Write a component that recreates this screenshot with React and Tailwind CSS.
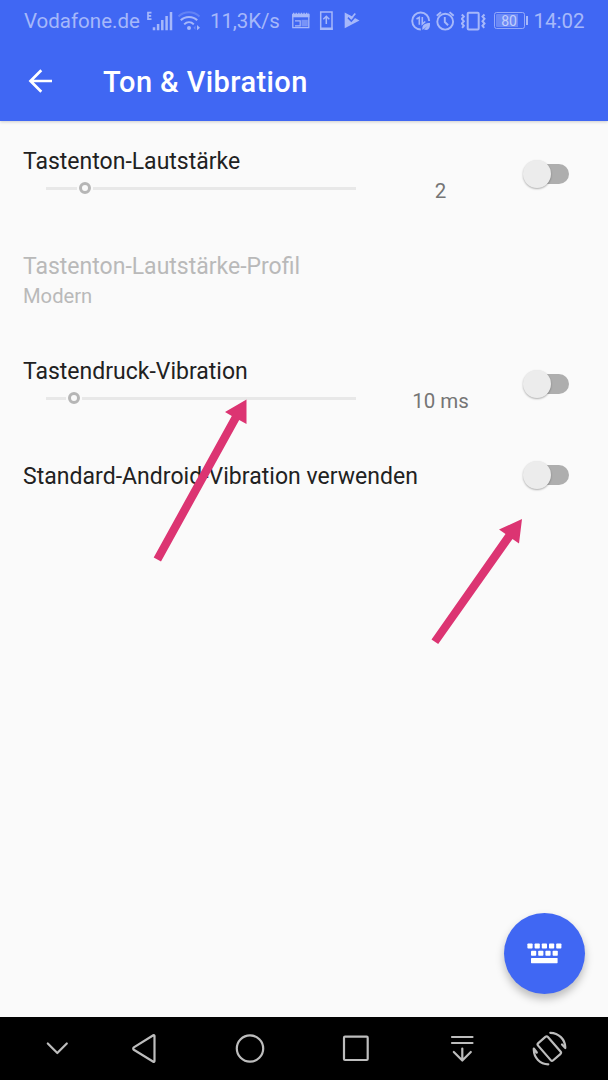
import React, { useState } from 'react';

// Icons of the status bar (left part)
const SignalIcon = () => (
  <svg className="ml-[7px] h-[22px] w-[28px] shrink-0" viewBox="146 9 28 22" fill="none" stroke="currentColor">
    <path d="M151.500 11.600h-3.500v6.600h3.500M148 14.900h3.200" strokeWidth="1.700" />
    <path d="M154 26.200v3M158.100 23v6.200M162.300 19v10.200M166.600 15v14.200M171 11v18.200" strokeWidth="2.500" />
  </svg>
);

const WifiIcon = () => (
  <svg className="ml-[4px] h-[22px] w-[23px] shrink-0" viewBox="178 9 23 22" fill="none" stroke="currentColor" strokeWidth="2">
    <path d="M178.500 15.400C184.500 10 193.500 10 199.500 15.400" opacity="0.350" />
    <path d="M180.800 19.300C185 15 193 15 197.200 19.300M184.200 23.400C187 20.600 191 20.600 193.800 23.400" />
    <circle cx="189" cy="27" r="2" fill="currentColor" stroke="none" />
    <path d="M195.500 24.500l-2 2.300 2 2.300z" fill="currentColor" stroke="none" opacity="0.400" />
    <path d="M197 24l3 2.700-3 2.600z" fill="currentColor" stroke="none" />
  </svg>
);

const NewsIcon = () => (
  <svg className="h-[18px] w-[18px] shrink-0" viewBox="292 12 18 18" fill="none" stroke="currentColor">
    <path d="M292.800 14.500h16v13.200h-16z" strokeWidth="1.300" />
    <path d="M292.200 15.800h17.200" strokeWidth="3" />
    <path d="M293 13.500h16" strokeWidth="1.500" strokeDasharray="1.300 1.300" />
    <path d="M295 20.800h5.200v5H295" strokeWidth="1.200" />
    <path d="M301.500 19.800h6.300v6.600h-6.300z" fill="currentColor" stroke="none" opacity="0.550" />
  </svg>
);

const UpdateIcon = () => (
  <svg className="ml-[9px] h-[20px] w-[14px] shrink-0" viewBox="319 11 14 20" fill="none" stroke="currentColor">
    <path d="M320.700 12h11.300v17.300h-11.300z" strokeWidth="1.500" />
    <path d="M320 28.700h12.700" strokeWidth="2.400" />
    <path d="M326.300 24v-7.500M323.300 19.300l3-3 3 3" strokeWidth="1.500" />
  </svg>
);

const PlayCheckIcon = () => (
  <svg className="-mt-[2px] ml-[11px] h-[17px] w-[16px] shrink-0" viewBox="344 12 16 17">
    <path d="M344.700 12.500L359.500 20.500 344.700 28.200z" fill="currentColor" />
    <path d="M348 17.600l3.300 3.400 6.500-7.300" fill="none" stroke="#4067f3" strokeWidth="1.600" />
    <path d="M349 15.700l2.300 2.500 4-4.700" fill="none" stroke="currentColor" strokeWidth="1.700" />
  </svg>
);

// Icons of the status bar (right part)
const DataSaverIcon = () => (
  <svg className="h-[20px] w-[20px] shrink-0" viewBox="410.500 10.500 20 20" fill="none" stroke="currentColor">
    <path d="M428.700 20.500A8.500 8.500 0 1 0 420.300 29" strokeWidth="1.900" />
    <path d="M416 18.500l2.800-1.700v7.500M421.800 16.500v7l3-2.500" strokeWidth="1.600" />
    <path d="M422 29.500c-1-4.500 2-7 7.500-7 .3 5-1.500 8-6 6.500l3.500-3.500z" fill="currentColor" stroke="none" />
  </svg>
);

const AlarmIcon = () => (
  <svg className="ml-[5.500px] h-[20px] w-[19px] shrink-0" viewBox="436.500 10.500 19 20" fill="none" stroke="currentColor" strokeWidth="1.900">
    <circle cx="445.700" cy="21.200" r="7.900" />
    <path d="M445.300 16.500v5l3.300 3.200M437.300 15.200l4.200-3.600M454.200 15.200l-4.200-3.600" />
  </svg>
);

const VibrateIcon = () => (
  <svg className="ml-[5.500px] h-[20px] w-[25px] shrink-0" viewBox="461.500 10.500 25 20" fill="none" stroke="currentColor">
    <rect x="468.200" y="12.200" width="11" height="16.800" rx="1" strokeWidth="2" />
    <path d="M462.300 14l2 2-2 2.300 2 2.400-2 2.300 2 2.300-1.700 2M485 14l-2 2 2 2.300-2 2.400 2 2.300-2 2.300 1.700 2" strokeWidth="2" />
  </svg>
);

const Battery = () => (
  <div className="-mt-px ml-[8px] flex shrink-0 items-center gap-px">
    <div className="flex h-[17px] w-[31px] items-center rounded-[2.500px] border border-[#a9bafa]/80 p-px">
      <div className="flex h-[13px] w-full items-center justify-center rounded-[1px] bg-[linear-gradient(to_right,#6b89f6_82%,transparent_82%)] text-[14px] leading-none text-[#c3cffc]">80</div>
    </div>
    <div className="h-[9px] w-[2px] bg-current" />
  </div>
);

const StatusBar = () => (
  <div className="flex h-[42px] items-center whitespace-nowrap pl-6 text-[20.500px] text-[#a6b8fa]">
    <span className="w-[115px] shrink-0">Vodafone.de</span>
    <SignalIcon />
    <WifiIcon />
    <span className="ml-[9px] w-[82px] shrink-0 tracking-[-0.100px]">11,3K/s</span>
    <NewsIcon />
    <UpdateIcon />
    <PlayCheckIcon />
    <div className="ml-auto flex w-[197.500px] shrink-0 items-center">
      <DataSaverIcon />
      <AlarmIcon />
      <VibrateIcon />
      <Battery />
      <span className="ml-[6px]">14:02</span>
    </div>
  </div>
);

const Header = ({ title }) => (
  <div className="flex h-[79px] items-center pl-[28px]">
    <button aria-label="Zurück" className="-mt-px">
      <svg className="h-[24px] w-[25px]" viewBox="28 69 25 24" fill="none" stroke="#fff" strokeWidth="2.700">
        <path d="M52 81H30.500M41.300 70.200L30.500 81l10.800 10.800" />
      </svg>
    </button>
    <h1 className="ml-[50px] mt-[2px] whitespace-nowrap text-[29px] font-medium leading-none tracking-[0.400px] text-white">{title}</h1>
  </div>
);

const Toggle = ({ checked, onChange }) => (
  <button role="switch" aria-checked={checked} onClick={onChange} className="flex h-[30px] w-[48px] shrink-0 items-center">
    <span className="ml-[7px] flex h-[20px] w-[40px] items-center rounded-full bg-[#aeaeae]">
      <span className={`-ml-[6px] -mt-px size-[28px] shrink-0 rounded-full bg-[#ececec] shadow-[0_1px_2px_rgba(0,0,0,0.300)] ${checked ? 'translate-x-[18px]' : ''}`} />
    </span>
  </button>
);

// Disabled slider: the track is cut out around the thumb
const Slider = ({ value }) => (
  <div className="flex h-3 w-[310px] items-center">
    <div className="h-[3px] bg-[#e8e8e8]" style={{ width: value - 8 }} />
    <div className="mx-[2px] size-[12px] shrink-0 rounded-full border-3 border-[#b6b6b6]" />
    <div className="h-[3px] flex-1 bg-[#e8e8e8]" />
  </div>
);

const SliderRow = ({ title, value, label }) => {
  const [on, setOn] = useState(false);
  return (
    <div className="flex h-[105px] pl-[23px] pt-[26px]">
      <div className="w-[357px] shrink-0">
        <div className="h-[30px] whitespace-nowrap text-[23px] leading-[30px] text-[#212121]">{title}</div>
        <div className="ml-[23px] mt-[5px]"><Slider value={value} /></div>
      </div>
      <div className="mt-[29px] w-[121px] shrink-0 text-center text-[20.500px] leading-[30px] text-[#757575]">{label}</div>
      <div className="ml-[21px] mt-[12px]"><Toggle checked={on} onChange={() => setOn(!on)} /></div>
    </div>
  );
};

const Arrows = () => (
  <svg className="pointer-events-none absolute left-0 top-0 h-[1080px] w-[608px]" viewBox="0 0 608 1080" fill="#dc3472">
    <path d="M246.500 399.500L225 412l6.800 4-78.100 141.500 7.300 4L239.200 420l7.300 4z" />
    <path d="M522 519L499 529.500l6.500 4.500-74 105.500 6.700 4.500 74.300-105 6.500 4.500z" />
  </svg>
);

const Fab = () => (
  <button aria-label="Tastatur" className="absolute bottom-[86px] right-[23px] flex size-[81px] items-center justify-center rounded-full bg-[#4067f3] shadow-[0_5px_9px_rgba(0,0,0,0.250)]">
    <svg className="h-[21px] w-[35px]" viewBox="0 0 35 21" fill="#fff">
      {[0, 7.2, 14.4, 21.6, 28.8].map((x) => <rect key={x} x={x + 0.4} y="0.500" width="5.200" height="5" rx="0.800" />)}
      {[3.6, 10.8, 18, 25.2].map((x) => <rect key={x} x={x + 0.4} y="7.800" width="5.200" height="5" rx="0.800" />)}
      <rect x="4" y="15" width="26.600" height="5.200" rx="0.600" />
    </svg>
  </button>
);

const NavBar = () => (
  <div className="h-[63px] bg-black">
    <svg className="h-[63px] w-[608px]" viewBox="0 1017 608 63" fill="none" stroke="#bdbdbd" strokeWidth="2.200" strokeLinecap="round" strokeLinejoin="round">
      <path d="M47.800 1043.500l9.500 9.500 9.500-9.500" />
      <path d="M154.500 1036v25a.8.8 0 0 1-1.200.7l-19.500-11.900a1.500 1.500 0 0 1 0-2.400l19.500-12.100a.8.8 0 0 1 1.200.7z" />
      <circle cx="250" cy="1048.500" r="13.200" />
      <rect x="344" y="1036.700" width="23.700" height="23.300" rx="1" />
      <path d="M452 1037h20.500M452 1043h20.500M462.300 1048.500v11.500M453.800 1052l8.500 8.500 8.500-8.500" />
      <rect x="542.800" y="1037.200" width="13" height="22.800" rx="1.800" transform="rotate(-41 549.300 1048.600)" />
      <path d="M550.300 1032.800c8.500.2 14.700 6.500 15 14.500M562 1044.500l3.300 3.500M548.300 1064.300c-8.500-.2-14.300-6.500-14.500-14.500v-1.300l3 4" />
    </svg>
  </div>
);

export default function App() {
  const [useDefault, setUseDefault] = useState(false);

  return (
    <div className="relative flex h-[1080px] w-[608px] flex-col overflow-hidden bg-[#fafafa] font-['Roboto',sans-serif]">
      <header className="h-[121px] shrink-0 bg-[#4067f3] shadow-[0_1px_3px_rgba(0,0,0,0.180)]">
        <StatusBar />
        <Header title="Ton & Vibration" />
      </header>

      <main className="flex-1">
        <SliderRow title="Tastenton-Lautstärke" value={39} label="2" />
        <div className="h-[105px] pl-[23px] pt-[26px] text-[#b9b9b9]">
          <div className="text-[23px] leading-[30px]">Tastenton-Lautstärke-Profil</div>
          <div className="-mt-px text-[20.200px] leading-[30px]">Modern</div>
        </div>
        <SliderRow title="Tastendruck-Vibration" value={28} label="10 ms" />
        <div className="flex h-[79px] pl-[23px] pt-[24px]">
          <div className="mt-[2px] w-[499px] shrink-0 whitespace-nowrap text-[23px] leading-[30px] tracking-[0.030px] text-[#212121]">Standard-Android-Vibration verwenden</div>
          <Toggle checked={useDefault} onChange={() => setUseDefault(!useDefault)} />
        </div>
      </main>

      <NavBar />
      <Arrows />
      <Fab />
    </div>
  );
}
